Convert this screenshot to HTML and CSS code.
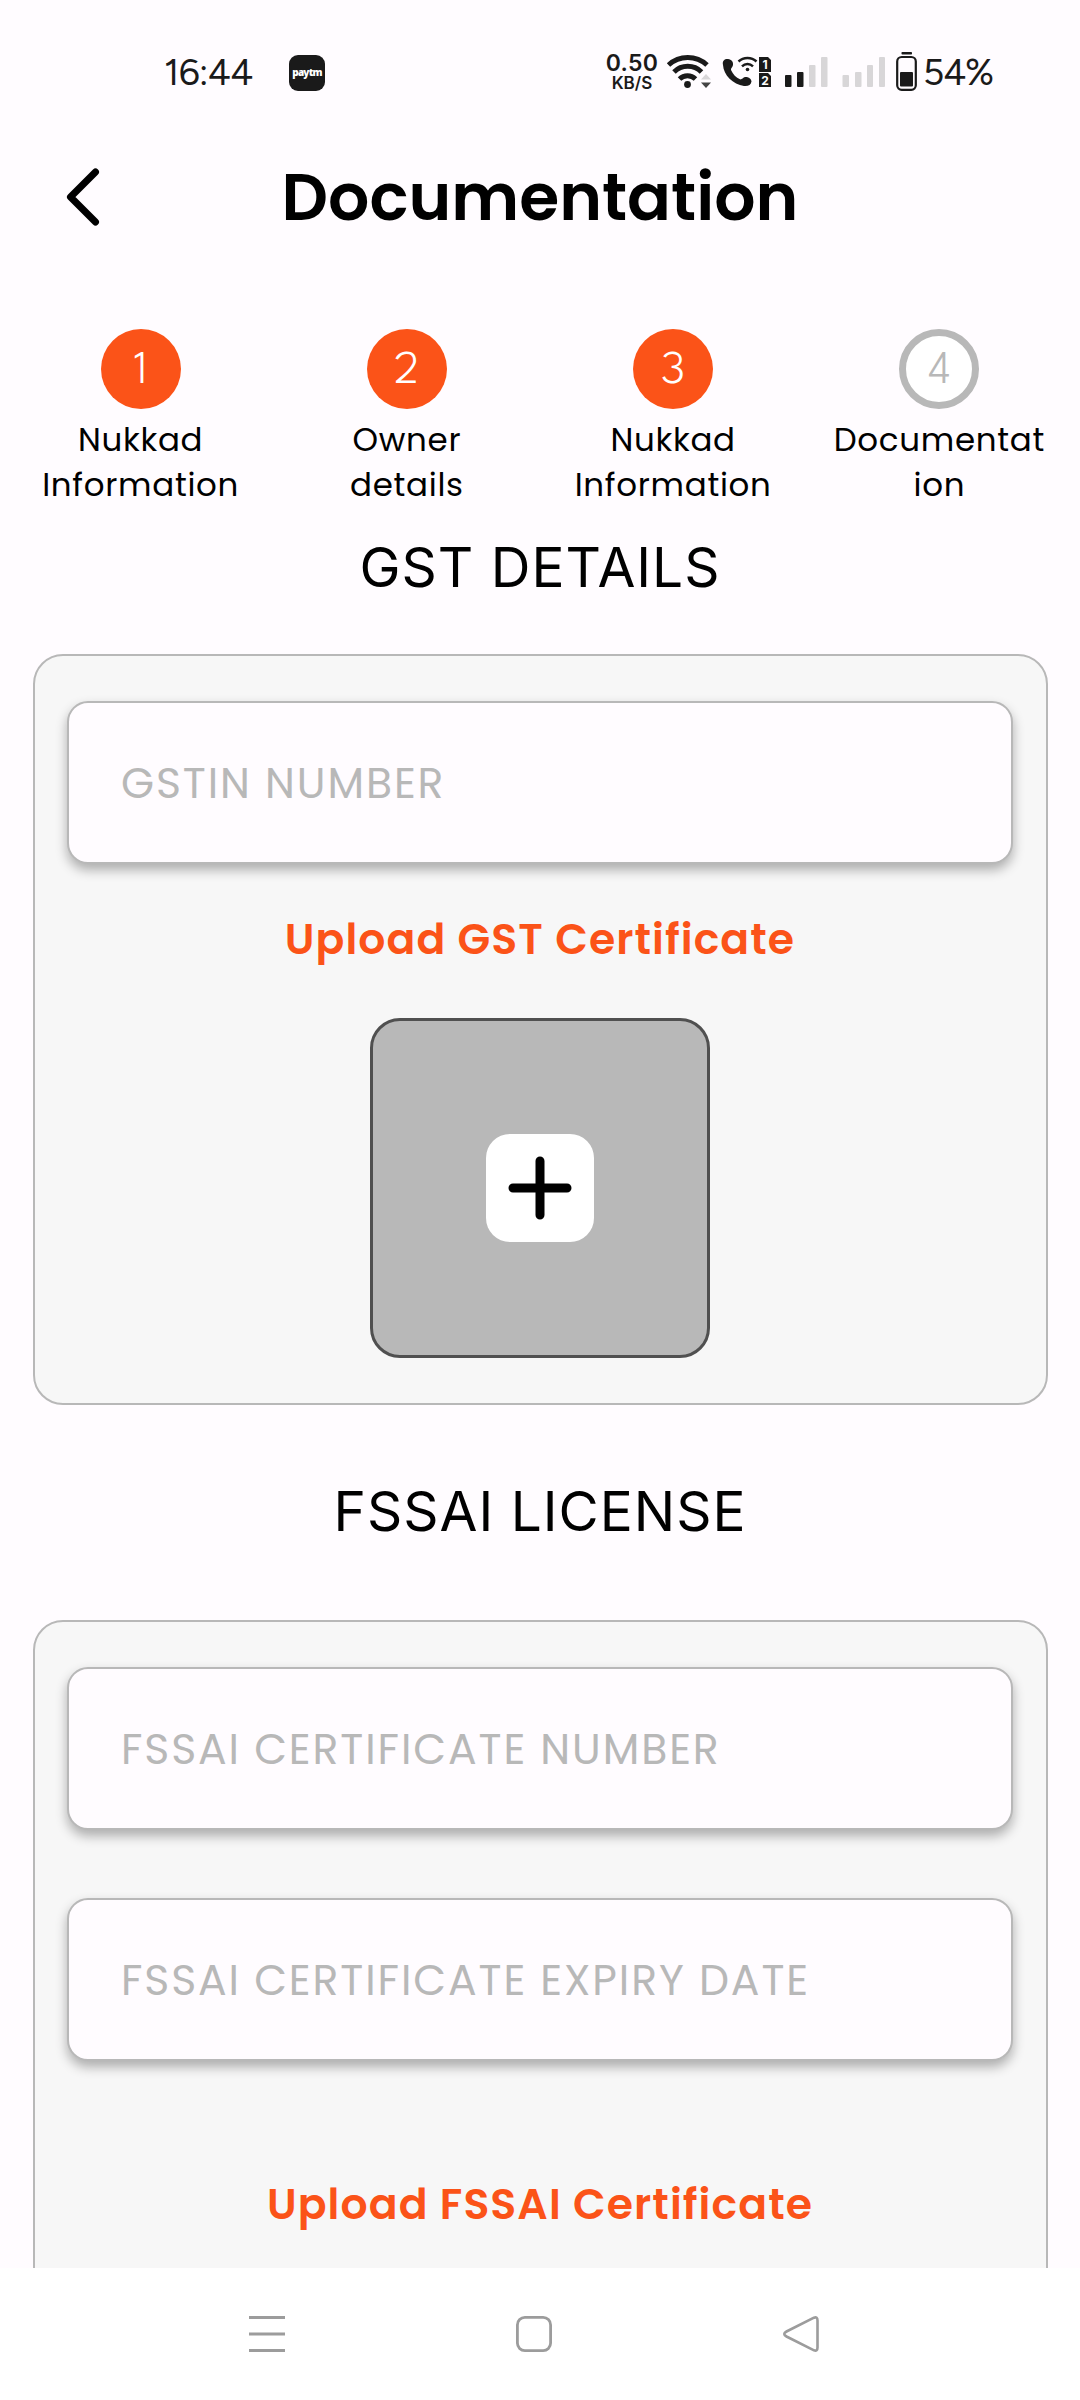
FILE: index.html
```html
<!DOCTYPE html>
<html lang="en">
<head>
<meta charset="utf-8">
<title>Documentation</title>
<link rel="stylesheet" href="styles.css">
</head>
<body>
<div class="screen">
  <div class="status">
    <span class="clock">16:44</span>
    <span class="app-badge">paytm</span>
    <div class="speed"><span class="speed-value">0.50</span><span class="speed-unit">KB/S</span></div>
    <svg class="status-icons" width="260" height="44" viewBox="660 50 260 44" fill="none">
      <g stroke="#1a1a1a" stroke-width="5">
        <path d="M668.5 65A28.5 28.5 0 0 1 707 65"/>
        <path d="M674 72A19.5 19.5 0 0 1 701.500 72"/>
        <path d="M679.500 79A11.500 11.500 0 0 1 695.500 79"/>
      </g>
      <circle cx="687.500" cy="84.500" r="3.400" fill="#1a1a1a"/>
      <path d="M701 79.500l5-5.500 5 5.500z" fill="#d8d6d8"/>
      <path d="M701 82.500l5 5.500 5-5.500z" fill="#444"/>
      <path fill="#1a1a1a" d="M723 65C722 60.500 725 58.700 728 59C731.500 59.300 733.500 62 733 65C732.700 67 730.500 68.500 731 70C733 74.500 736 77.500 740 79.300C741.500 80 743 77.500 745 77C748.500 76.500 751.500 79 751.500 81.500C751 85 748 86.500 744 86C733 84.500 723.500 75 723 65Z"/>
      <g stroke="#1a1a1a" stroke-width="2.500">
        <path d="M738.500 61.500A13 13 0 0 1 756.500 61.500"/>
        <path d="M742 66.300A8 8 0 0 1 753 66.300"/>
      </g>
      <circle cx="747.500" cy="69.500" r="1.800" fill="#1a1a1a"/>
      <path fill="#1a1a1a" d="M759 57h9l3 3v12h-12zM759 73h9l3 3v11h-12z"/>
      <text class="sim" x="765" y="69">1</text>
      <text class="sim" x="765" y="84.500">2</text>
      <g fill="#1a1a1a">
        <rect x="785" y="75" width="6.500" height="12" rx="1"/>
        <rect x="797" y="72" width="6.500" height="15" rx="1"/>
      </g>
      <g fill="#d8d6d8">
        <rect x="809" y="65" width="6.500" height="22" rx="1"/>
        <rect x="821" y="57" width="6.500" height="30" rx="1"/>
        <rect x="842.500" y="75" width="6.500" height="12" rx="1"/>
        <rect x="855" y="72" width="6.500" height="15" rx="1"/>
        <rect x="867" y="65" width="6" height="22" rx="1"/>
        <rect x="879" y="57" width="6" height="30" rx="1"/>
      </g>
      <rect x="897.200" y="57" width="18.600" height="32.800" rx="4.500" stroke="#1a1a1a" stroke-width="2.200"/>
      <rect x="901.500" y="52" width="10.500" height="2.500" rx=".8" fill="#1a1a1a"/>
      <rect x="900" y="72" width="13" height="14.500" rx="1" fill="#1a1a1a"/>
    </svg>
    <span class="percent">54%</span>
  </div>

  <header class="header">
    <svg class="back" width="40" height="64" viewBox="0 0 40 64" fill="none" stroke="#000" stroke-width="7" stroke-linecap="round" stroke-linejoin="round"><path d="M32.500 7L7.500 32L32.500 57"/></svg>
    <h1 class="title">Documentation</h1>
  </header>

  <main class="content">
    <ol class="steps">
      <li class="step"><span class="dot">1</span><span class="label">Nukkad<br>Information</span></li>
      <li class="step"><span class="dot">2</span><span class="label">Owner<br>details</span></li>
      <li class="step"><span class="dot">3</span><span class="label">Nukkad<br>Information</span></li>
      <li class="step"><span class="dot dot-pending">4</span><span class="label">Documentat<br>ion</span></li>
    </ol>

    <h2 class="heading">GST DETAILS</h2>
    <section class="card">
      <div class="field">GSTIN NUMBER</div>
      <p class="upload-title">Upload GST Certificate</p>
      <div class="upload">
        <div class="add">
          <svg width="64" height="64" viewBox="0 0 64 64" stroke="#000" stroke-width="9" stroke-linecap="round"><path d="M32 5v54M5 32h54"/></svg>
        </div>
      </div>
    </section>

    <h2 class="heading heading-second">FSSAI LICENSE</h2>
    <section class="card card-fssai">
      <div class="field">FSSAI CERTIFICATE NUMBER</div>
      <div class="field field-next">FSSAI CERTIFICATE EXPIRY DATE</div>
      <p class="upload-title upload-title-fssai">Upload FSSAI Certificate</p>
    </section>
  </main>

  <nav class="navbar">
    <svg width="38" height="38" viewBox="0 0 38 38" stroke="#9c9c9c" stroke-width="3"><path d="M1 2.500h36M1 19h36M1 35.500h36"/></svg>
    <svg width="38" height="38" viewBox="0 0 38 38" fill="none" stroke="#9c9c9c" stroke-width="2.800"><rect x="2.400" y="2.400" width="33.200" height="33.200" rx="7.500"/></svg>
    <svg width="38" height="38" viewBox="0 0 38 38" fill="none" stroke="#9c9c9c" stroke-width="2.600"><path d="M32 2.700L4.500 16.500Q0 19 4.500 21.500L32 35.300Q35.500 36.500 35.500 32.500V5.500Q35.500 1.500 32 2.700Z"/></svg>
  </nav>
</div>
</body>
</html>
```
FILE: styles.css
```css
* {
  box-sizing: border-box;
}

body {
  margin: 0;
  background: #fffcff;
  font-family: Poppins, Inter, sans-serif;
  color: #000;
}

h1, h2, p, ol {
  margin: 0;
  padding: 0;
  font-weight: 400;
}

.screen {
  display: flex;
  flex-direction: column;
  width: 1080px;
  height: 2400px;
  overflow: hidden;
}

/* System status bar */
.status {
  display: flex;
  align-items: center;
  flex: none;
  height: 144px;
  padding-left: 164px;
  font-family: Figtree, Inter, sans-serif;
  color: #1a1a1a;
}

.clock {
  width: 125px;
  font-size: 37px;
  letter-spacing: -0.6px;
}

.app-badge {
  width: 36px;
  height: 36px;
  margin-top: 2px;
  border-radius: 9px;
  background: #1a1a1a;
  color: #fff;
  font: 800 10px/34px "Open Sans", sans-serif;
  letter-spacing: -0.8px;
  text-align: center;
}

.speed {
  display: flex;
  flex-direction: column;
  align-items: center;
  width: 56px;
  margin: 2px 0 0 279px;
  font-family: Inter, sans-serif;
  font-weight: 600;
}

.speed-value {
  font-size: 23px;
  line-height: 21px;
  letter-spacing: 0.3px;
}

.speed-unit {
  font-size: 17px;
  line-height: 19px;
}

.sim {
  font: 700 12px Inter, sans-serif;
  fill: #fff;
  text-anchor: middle;
}

.percent {
  margin-left: 3px;
  font-size: 37px;
  letter-spacing: -1.1px;
}

/* Page header */
.header {
  display: grid;
  grid-template-columns: 1fr auto 1fr;
  align-items: center;
  flex: none;
  height: 106px;
}

.back {
  margin-left: 63px;
}

.title {
  font-size: 64.8px;
  font-weight: 600;
}

.content {
  flex: 1;
  min-height: 0;
  overflow: hidden;
}

/* Progress steps */
.steps {
  display: grid;
  grid-template-columns: repeat(4, 1fr);
  padding: 79px 7.5px 0;
  list-style: none;
}

.step {
  display: flex;
  flex-direction: column;
  align-items: center;
}

.dot {
  width: 80px;
  height: 80px;
  border-radius: 50%;
  background: #fb5318;
  color: #fff;
  font-family: "League Spartan", Poppins, Inter, sans-serif;
  font-size: 48px;
  font-weight: 300;
  line-height: 85px;
  text-align: center;
}

.dot-pending {
  border: 7px solid #b8b8b8;
  background: #fff;
  color: #b8b8b8;
  line-height: 71px;
}

.label {
  margin-top: 8px;
  font-size: 32.5px;
  line-height: 45px;
  letter-spacing: 0.7px;
  text-align: center;
}

/* Sections */
.heading {
  margin: 30px 0 57px;
  font-family: Inter, sans-serif;
  font-size: 55px;
  font-weight: 400;
  line-height: 60px;
  letter-spacing: 1px;
  text-align: center;
}

.heading-second {
  margin: 76px 0 79px;
}

.card {
  margin: 0 32.5px;
  padding: 45px 32.5px;
  border: 2px solid #b8b8b8;
  border-radius: 30px;
  background: #f7f7f7;
}

.card-fssai {
  height: 900px;
}

.field {
  height: 163px;
  padding: 2px 0 0 52px;
  border: 2px solid #b8b8b8;
  border-radius: 21px;
  background: #fffcff;
  box-shadow: 0 6px 12px rgba(0, 0, 0, 0.3);
  color: #b8b8b8;
  font-size: 42.5px;
  line-height: 156px;
  letter-spacing: 1.9px;
  white-space: nowrap;
}

.field-next {
  margin-top: 68px;
}

.upload-title {
  margin-top: 50px;
  color: #fb5318;
  font-size: 42.5px;
  font-weight: 600;
  line-height: 50px;
  letter-spacing: 1.1px;
  text-align: center;
}

.upload-title-fssai {
  margin-top: 118px;
}

.upload {
  display: flex;
  align-items: center;
  justify-content: center;
  width: 340px;
  height: 340px;
  margin: 54px auto 0;
  border: 3px solid #505050;
  border-radius: 30px;
  background: #b8b8b8;
}

.add {
  display: flex;
  align-items: center;
  justify-content: center;
  width: 108px;
  height: 108px;
  border-radius: 24px;
  background: #fff;
}

/* System navigation bar */
.navbar {
  display: flex;
  align-items: center;
  justify-content: space-between;
  flex: none;
  height: 132px;
  padding: 0 260px 0 248px;
  background: #fff;
}
```
